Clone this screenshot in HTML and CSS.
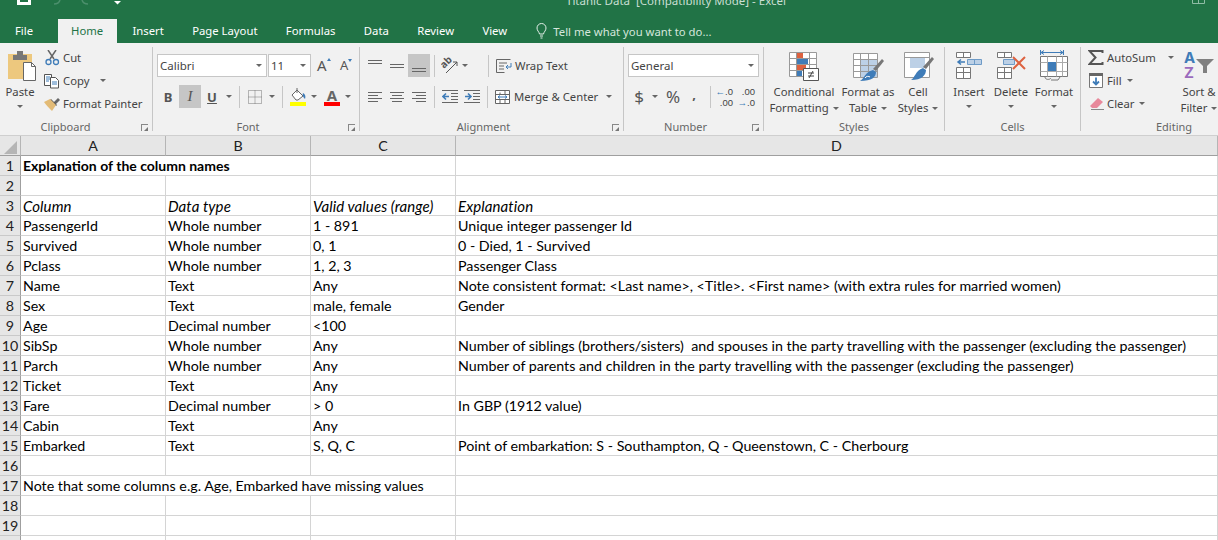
FILE: index.html
```html
<!DOCTYPE html>
<html lang="en">
<head>
  <meta charset="UTF-8" />
  <title>Titanic Data [Compatibility Mode] - Excel</title>
  <link rel="stylesheet" href="styles.css">
</head>
<body>
  <header class="titlebar">
    <svg class="qa-save" width="16" height="6" viewBox="0 0 16 6"><path d="M1 0h14v5H1z" fill="#fff"/><path d="M4 0h8v2H4z" fill="#217346"/></svg>
    <svg class="qa-undo" width="36" height="6" viewBox="0 0 36 6"><path d="M7 0c-1 3-3 4-6 4M29 0c1 3 3 4 6 4" fill="none" stroke="#4b8f6c" stroke-width="1.5"/></svg>
    <svg class="qa-more" width="7" height="5" viewBox="0 0 7 5"><path d="M0 1h7L3.5 4.500z" fill="#fff"/></svg>
    <span class="doc-title">Titanic Data&nbsp; [Compatibility Mode] - Excel</span>
    <svg class="win-btn" width="13" height="4" viewBox="0 0 13 4"><path d="M.5 0v3.500h12V0M6.500 0v3.500" fill="none" stroke="#8fbca5"/></svg>
  </header>

  <nav class="tabs">
    <span class="tab tab-file">File</span>
    <span class="tab tab-active">Home</span>
    <span class="tab">Insert</span>
    <span class="tab">Page Layout</span>
    <span class="tab">Formulas</span>
    <span class="tab">Data</span>
    <span class="tab">Review</span>
    <span class="tab">View</span>
    <span class="tell-me">
      <svg width="11" height="16" viewBox="0 0 11 16"><path d="M3.500 11C3 8.500 1 7.800 1 5a4.500 4.500 0 0 1 9 0c0 2.800-2 3.500-2.500 6zM4 13h3M4.500 15h2" fill="none" stroke="#e4efe9"/></svg>
      Tell me what you want to do...
    </span>
  </nav>

  <section class="ribbon">
    <!-- Clipboard -->
    <div class="group group-clipboard">
      <div class="group-body">
        <div class="big big-paste">
          <svg class="paste-icon" width="32" height="37" viewBox="5 47 32 37">
            <path d="M8 54h24v25H8z" fill="#edc87e"/>
            <path d="M13 55h14v5H13zM17 51h6v4h-6z" fill="#777"/>
            <path d="M23.500 62.500h8l4 4v14h-12z" fill="#fff" stroke="#666"/>
            <path d="M31.500 62.500v4h4" fill="none" stroke="#666"/>
          </svg>
          <span>Paste</span>
          <span class="caret"></span>
        </div>
        <div class="stack">
          <div class="row-small">
            <svg width="16" height="16" viewBox="44 49 16 16"><path d="M50 58 56 49M54 58 48 49" stroke="#666" stroke-width="1.500" fill="none"/><circle cx="48.500" cy="61" r="2.500" fill="none" stroke="#3f7cb8" stroke-width="1.300"/><circle cx="56" cy="61" r="2.500" fill="none" stroke="#3f7cb8" stroke-width="1.300"/></svg>
            <span>Cut</span>
          </div>
          <div class="row-small">
            <svg width="16" height="16" viewBox="44 72 16 16"><path d="M44.500 73.500h7v11h-7z" fill="#fff" stroke="#555"/><path d="M50.500 76.500h5l3 3v7.500h-8z" fill="#fff" stroke="#555"/><path d="M46 76h4M46 78h4M46 80h3M52 81h5M52 83h5" stroke="#3f7cb8"/></svg>
            <span>Copy</span><span class="caret caret-copy"></span>
          </div>
          <div class="row-small">
            <svg width="16" height="16" viewBox="44 95 16 16"><path d="M53 102l5-5 2 2-5 5z" fill="#666"/><path d="M51 98l6 6-1 1-6-6z" fill="#555"/><path d="M44 101l6-3 6 6-4 6c-3-3-6-6-8-9z" fill="#e3bb76"/></svg>
            <span>Format Painter</span>
          </div>
        </div>
      </div>
      <div class="group-foot"><span class="group-label">Clipboard</span><span class="launcher"></span></div>
    </div>

    <!-- Font -->
    <div class="group group-font">
      <div class="group-body tools">
        <div class="tool-row">
          <div class="select select-font">Calibri<span class="caret"></span></div>
          <div class="select select-size">11<span class="caret"></span></div>
          <span class="font-step font-grow">A<i class="tri-up"></i></span>
          <span class="font-step font-shrink">A<i class="tri-down"></i></span>
        </div>
        <div class="tool-row">
          <span class="btn glyph-b">B</span>
          <span class="btn btn-on glyph-i">I</span>
          <span class="btn glyph-u">U</span>
          <span class="caret-slot"><span class="caret"></span></span>
          <span class="sep"></span>
          <span class="btn">
            <svg width="14" height="14" viewBox="0 0 14 14"><path d="M.5.500h13v13H.5zM7 .5v13M.5 7h13" fill="none" stroke="#777" stroke-dasharray="1 1"/></svg>
          </span>
          <span class="caret-slot"><span class="caret"></span></span>
          <span class="sep"></span>
          <span class="btn">
            <svg width="18" height="20" viewBox="0 0 18 20"><path d="M3 8l5-5 6 6-5 4H7z" fill="#fff" stroke="#666"/><path d="M8 1v5" stroke="#666"/><path d="M14 6c2 1 3 3 2 6-1-1-3-3-2-6z" fill="#3f7cb8"/><path d="M1 15h16v4H1z" fill="#ffff00"/></svg>
          </span>
          <span class="caret-slot caret-slot-fill"><span class="caret"></span></span>
          <span class="btn btn-color"><span class="color-a">A</span></span>
          <span class="caret-slot caret-slot-color"><span class="caret"></span></span>
        </div>
      </div>
      <div class="group-foot"><span class="group-label">Font</span><span class="launcher"></span></div>
    </div>

    <!-- Alignment -->
    <div class="group group-align">
      <div class="group-body tools">
        <div class="tool-row">
          <span class="btn"><svg width="14" height="14" viewBox="0 0 14 14"><path d="M0 1.500h14M0 4.500h14" stroke="#666"/></svg></span>
          <span class="btn"><svg width="14" height="14" viewBox="0 0 14 14"><path d="M0 5.500h14M0 8.500h14" stroke="#666"/></svg></span>
          <span class="btn btn-on"><svg width="14" height="14" viewBox="0 0 14 14"><path d="M0 9.500h14M0 12.500h14" stroke="#666"/></svg></span>
          <span class="sep"></span>
          <span class="btn">
            <svg width="18" height="18" viewBox="0 0 18 18"><text class="orient-text" transform="translate(3 12) rotate(-45)">ab</text><path d="M5 16 16 5M16 5h-4M16 5v4" fill="none" stroke="#555"/></svg>
          </span>
          <span class="caret-slot caret-slot-orient"><span class="caret"></span></span>
          <span class="sep sep-wrap"></span>
          <svg class="wide-icon" width="16" height="16" viewBox="0 0 16 16"><path d="M.5 1.500h14M.5 14.500h8M.5 1.500v13" fill="none" stroke="#666"/><path d="M3 5h8M3 8h5M3 11h5" stroke="#666"/><path d="M15 5v4h-5M12 7l-2 2 2 2" fill="none" stroke="#3f7cb8"/></svg>
          <span class="tool-text">Wrap Text</span>
        </div>
        <div class="tool-row">
          <span class="btn"><svg width="14" height="14" viewBox="0 0 14 14"><path d="M0 2.500h14M0 5.500h10M0 8.500h14M0 11.500h10" stroke="#666"/></svg></span>
          <span class="btn"><svg width="14" height="14" viewBox="0 0 14 14"><path d="M0 2.500h14M2 5.500h10M0 8.500h14M2 11.500h10" stroke="#666"/></svg></span>
          <span class="btn"><svg width="14" height="14" viewBox="0 0 14 14"><path d="M0 2.500h14M4 5.500h10M0 8.500h14M4 11.500h10" stroke="#666"/></svg></span>
          <span class="sep"></span>
          <span class="btn"><svg width="16" height="14" viewBox="0 0 16 14"><path d="M0 .5h16M9 3.500h7M9 6.500h7M9 9.500h7M0 12.500h16" stroke="#666"/><path d="M1 6.500h6M4 3.500l-3 3 3 3" fill="none" stroke="#3f7cb8" stroke-width="1.600"/></svg></span>
          <span class="btn"><svg width="16" height="14" viewBox="0 0 16 14"><path d="M0 .5h16M9 3.500h7M9 6.500h7M9 9.500h7M0 12.500h16" stroke="#666"/><path d="M1 6.500h6M4 3.500l3 3-3 3" fill="none" stroke="#3f7cb8" stroke-width="1.600"/></svg></span>
          <span class="sep sep-merge"></span>
          <svg class="wide-icon" width="16" height="16" viewBox="0 0 16 16"><path d="M.5 1.500h14v13H.5zM.5 5.500h14M.5 10.500h14" fill="#fff" stroke="#666"/><path d="M5 3.500v2M10 1.500v4M5 10.500v4M10 10.500v4" stroke="#666"/><path d="M3 8h9M5 6.500 3 8l2 1.500M10 6.500 12 8l-2 1.500" fill="none" stroke="#3f7cb8"/></svg>
          <span class="tool-text">Merge &amp; Center</span>
          <span class="caret caret-merge"></span>
        </div>
      </div>
      <div class="group-foot"><span class="group-label">Alignment</span><span class="launcher"></span></div>
    </div>

    <!-- Number -->
    <div class="group group-number">
      <div class="group-body tools">
        <div class="tool-row">
          <div class="select select-format">General<span class="caret"></span></div>
        </div>
        <div class="tool-row">
          <span class="btn num-glyph">$</span>
          <span class="caret-slot caret-slot-num"><span class="caret"></span></span>
          <span class="btn num-glyph num-percent">%</span>
          <span class="btn num-glyph num-comma">,</span>
          <span class="sep sep-num"></span>
          <span class="btn decimal"><i><b>←</b>.0</i><i>.00</i></span>
          <span class="btn decimal"><i>.00</i><i><b>→</b>.0</i></span>
        </div>
      </div>
      <div class="group-foot"><span class="group-label">Number</span><span class="launcher"></span></div>
    </div>

    <!-- Styles -->
    <div class="group group-styles">
      <div class="group-body">
        <div class="big big-cond">
          <svg width="34" height="37" viewBox="788 47 34 37">
            <path d="M790.500 52.500h27v24h-27zM790.500 58.500h27M790.500 64.500h27M790.500 70.500h27M797.500 52.500v24M810.500 52.500v24" fill="#fff" stroke="#999"/>
            <path d="M798 53h6v5h-6zM798 65h9v5h-9z" fill="#dd6240"/>
            <path d="M798 59h11v5h-11zM798 71h5v5h-5z" fill="#3f7cb8"/>
            <path d="M804.500 68.500h15v12h-15z" fill="#fff" stroke="#555"/>
            <path d="M809 73h6M809 76h6M810 78l4-7" fill="none" stroke="#444"/>
          </svg>
          <span>Conditional</span>
          <span>Formatting<i class="caret caret-inline"></i></span>
        </div>
        <div class="big big-table">
          <svg width="34" height="37" viewBox="853 47 34 37">
            <path d="M855.500 53.500h24v24h-24z" fill="#fff" stroke="#999"/>
            <path d="M862 59h17v18h-17z" fill="#bcd0e6"/>
            <path d="M855.500 59.500h24M855.500 65.500h24M855.500 71.500h24M862.500 53.500v24M870.500 53.500v24" fill="none" stroke="#999"/>
            <path d="M884 59l2 2-8 10-3-2z" fill="#777"/>
            <path d="M875 70l3 2c0 5-4 9-16 9 4-2 5-9 13-11z" fill="#3f7cb8"/>
            <path d="M867 78c1-2 4-2 5-1" stroke="#fff" fill="none"/>
          </svg>
          <span>Format as</span>
          <span>Table<i class="caret caret-inline"></i></span>
        </div>
        <div class="big big-cell">
          <svg width="34" height="37" viewBox="902 47 34 37">
            <path d="M905.500 52.500h25v25h-25z" fill="#fff" stroke="#999"/>
            <path d="M905.500 57.500h25" stroke="#999"/>
            <path d="M911 58h15v10h-15z" fill="#bcd0e6"/>
            <path d="M933 57l2 2-8 10-3-2z" fill="#777"/>
            <path d="M924 68l3 2c0 5-4 10-15 10 4-2 4-9 12-12z" fill="#3f7cb8"/>
          </svg>
          <span>Cell</span>
          <span>Styles<i class="caret caret-inline"></i></span>
        </div>
      </div>
      <div class="group-foot"><span class="group-label">Styles</span></div>
    </div>

    <!-- Cells -->
    <div class="group group-cells">
      <div class="group-body">
        <div class="big big-insert">
          <svg width="30" height="37" viewBox="955 47 30 37">
            <path d="M957.500 52.500h14v5h-14zM964.500 52.500v5M957.500 67.500h14v11h-14zM957.500 72.500h14M964.500 67.500v11" fill="#fff" stroke="#777"/>
            <path d="M968.500 59.500h14v5h-14zM975.500 59.500v5" fill="#bcd0e6" stroke="#6e9bc7"/>
            <path d="M966 62h-7M962 59.500 959 62l3 2.500" fill="none" stroke="#3f7cb8" stroke-width="1.500"/>
          </svg>
          <span>Insert</span>
          <span class="caret caret-big"></span>
        </div>
        <div class="big big-delete">
          <svg width="32" height="37" viewBox="996 47 32 37">
            <path d="M998.500 52.500h14v5h-14zM1005.500 52.500v5M998.500 67.500h14v11h-14zM998.500 72.500h14M1005.500 67.500v11" fill="#fff" stroke="#777"/>
            <path d="M1004.500 59.500h11v5h-11z" fill="#bcd0e6" stroke="#6e9bc7"/>
            <path d="M1014 57l12 12M1026 57l-12 12" stroke="#dd6240" stroke-width="2"/>
          </svg>
          <span>Delete</span>
          <span class="caret caret-big"></span>
        </div>
        <div class="big big-format">
          <svg width="30" height="37" viewBox="1039 47 30 37">
            <path d="M1040.500 50v5M1063.500 50v5" stroke="#3f7cb8"/>
            <path d="M1041 52.500h22M1044 50.500l-3 2 3 2M1060 50.500l3 2-3 2" fill="none" stroke="#3f7cb8"/>
            <path d="M1040.500 56.500h27v20h-27z" fill="#fff" stroke="#777"/>
            <path d="M1040.500 62.500h27M1040.500 71.500h27M1047.500 56.500v20M1056.500 56.500v20M1062.500 56.500v20" fill="none" stroke="#aaa"/>
            <path d="M1048 62h8v9h-8z" fill="#3f7cb8"/>
            <path d="M1045 77c0 3 5 3 6 1M1051 80h7l2-3" fill="none" stroke="#777"/>
          </svg>
          <span>Format</span>
          <span class="caret caret-big"></span>
        </div>
      </div>
      <div class="group-foot"><span class="group-label">Cells</span></div>
    </div>

    <!-- Editing -->
    <div class="group group-edit">
      <div class="group-body">
        <div class="stack stack-edit">
          <div class="row-small">
            <svg width="16" height="16" viewBox="1088 49 16 16"><path d="M1102.500 52v-2h-13l6 6.500-6 6.500h13v-2" fill="none" stroke="#555" stroke-width="2"/></svg>
            <span>AutoSum</span><span class="caret caret-sum"></span>
          </div>
          <div class="row-small">
            <svg width="16" height="16" viewBox="1088 72 16 16"><path d="M1089.500 72.500h13v14h-13z" fill="#fff" stroke="#777"/><path d="M1089 72h14v3h-14z" fill="#666"/><path d="M1096 76.500v7M1093 80.500l3 3 3-3" fill="none" stroke="#3f7cb8" stroke-width="1.800"/></svg>
            <span>Fill</span><span class="caret caret-tight"></span>
          </div>
          <div class="row-small">
            <svg width="16" height="16" viewBox="1088 95 16 16"><path d="M1098 97l5 4-6 6h-5l-2-2z" fill="#e8899b"/><path d="M1091 108.500h13" stroke="#888"/></svg>
            <span>Clear</span><span class="caret caret-tight"></span>
          </div>
        </div>
        <div class="big big-sort">
          <svg width="38" height="37" viewBox="1179 47 38 37">
            <text x="1183" y="63" class="sort-a">A</text>
            <text x="1183" y="78" class="sort-z">Z</text>
            <path d="M1195 59h18l-7 7v7h-4v-7z" fill="#808080"/>
          </svg>
          <span>Sort &amp;</span>
          <span>Filter<i class="caret caret-inline"></i></span>
        </div>
      </div>
      <div class="group-foot"><span class="group-label">Editing</span></div>
    </div>
  </section>

  <main class="sheet">
    <div class="corner"><svg width="13" height="13" viewBox="0 0 13 13"><path d="M13 0v13H0z" fill="#b5b5b5"/></svg></div>
    <div class="col-head">A</div><div class="col-head">B</div><div class="col-head">C</div><div class="col-head">D</div>

    <div class="row-head">1</div><div class="cell span-2 bold">Explanation of the column names</div><div class="cell"></div><div class="cell"></div>
    <div class="row-head">2</div><div class="cell"></div><div class="cell"></div><div class="cell"></div><div class="cell"></div>
    <div class="row-head">3</div><div class="cell italic">Column</div><div class="cell italic">Data type</div><div class="cell italic">Valid values (range)</div><div class="cell italic">Explanation</div>
    <div class="row-head">4</div><div class="cell">PassengerId</div><div class="cell">Whole number</div><div class="cell">1 - 891</div><div class="cell">Unique integer passenger Id</div>
    <div class="row-head">5</div><div class="cell">Survived</div><div class="cell">Whole number</div><div class="cell">0, 1</div><div class="cell">0 - Died, 1 - Survived</div>
    <div class="row-head">6</div><div class="cell">Pclass</div><div class="cell">Whole number</div><div class="cell">1, 2, 3</div><div class="cell">Passenger Class</div>
    <div class="row-head">7</div><div class="cell">Name</div><div class="cell">Text</div><div class="cell">Any</div><div class="cell">Note consistent format: &lt;Last name&gt;, &lt;Title&gt;. &lt;First name&gt; (with extra rules for married women)</div>
    <div class="row-head">8</div><div class="cell">Sex</div><div class="cell">Text</div><div class="cell">male, female</div><div class="cell">Gender</div>
    <div class="row-head">9</div><div class="cell">Age</div><div class="cell">Decimal number</div><div class="cell">&lt;100</div><div class="cell"></div>
    <div class="row-head">10</div><div class="cell">SibSp</div><div class="cell">Whole number</div><div class="cell">Any</div><div class="cell">Number of siblings (brothers/sisters)&nbsp; and spouses in the party travelling with the passenger (excluding the passenger)</div>
    <div class="row-head">11</div><div class="cell">Parch</div><div class="cell">Whole number</div><div class="cell">Any</div><div class="cell">Number of parents and children in the party travelling with the passenger (excluding the passenger)</div>
    <div class="row-head">12</div><div class="cell">Ticket</div><div class="cell">Text</div><div class="cell">Any</div><div class="cell"></div>
    <div class="row-head">13</div><div class="cell">Fare</div><div class="cell">Decimal number</div><div class="cell">&gt; 0</div><div class="cell">In GBP (1912 value)</div>
    <div class="row-head">14</div><div class="cell">Cabin</div><div class="cell">Text</div><div class="cell">Any</div><div class="cell"></div>
    <div class="row-head">15</div><div class="cell">Embarked</div><div class="cell">Text</div><div class="cell">S, Q, C</div><div class="cell">Point of embarkation: S - Southampton, Q - Queenstown, C - Cherbourg</div>
    <div class="row-head">16</div><div class="cell"></div><div class="cell"></div><div class="cell"></div><div class="cell"></div>
    <div class="row-head">17</div><div class="cell span-3">Note that some columns e.g. Age, Embarked have missing values</div><div class="cell"></div>
    <div class="row-head">18</div><div class="cell"></div><div class="cell"></div><div class="cell"></div><div class="cell"></div>
    <div class="row-head">19</div><div class="cell"></div><div class="cell"></div><div class="cell"></div><div class="cell"></div>
    <div class="row-head"></div><div class="cell"></div><div class="cell"></div><div class="cell"></div><div class="cell"></div>
  </main>
</body>
</html>
```

FILE: styles.css
```css
* {
  box-sizing: border-box;
}
html, body {
  margin: 0;
  height: 540px;
  overflow: hidden;
}
body {
  font-family: "Noto Sans", sans-serif;
  font-size: 11.3px;
  color: #444;
  background-color: #fff;
  display: flex;
  flex-direction: column;
}
svg {
  display: block;
  flex: none;
}

/* title bar, cut off by the top of the window */
.titlebar {
  height: 19px;
  flex: none;
  background-color: #217346;
  color: #c9dfd3;
  display: flex;
  align-items: flex-start;
  overflow: hidden;
}
.qa-save {
  margin-left: 16px;
}
.qa-undo {
  margin-left: 21px;
}
.qa-more {
  margin-left: 25px;
}
.doc-title {
  margin-left: 445px;
  margin-top: -7px;
  font-size: 11.5px;
  line-height: 16px;
  white-space: nowrap;
}
.win-btn {
  margin-left: auto;
  margin-right: 13px;
}

/* tabs */
.tabs {
  height: 24px;
  flex: none;
  background-color: #217346;
  color: #fff;
  display: flex;
  align-items: center;
  font-size: 11.3px;
}
.tab {
  height: 24px;
  line-height: 24px;
  padding: 0 14.2px;
}
.tab-file {
  padding: 0 25px 0 15px;
}
.tab-active {
  background-color: #f1f1f1;
  color: #217346;
  padding: 0 14px 0 13px;
  margin-right: 1px;
}
.tell-me {
  display: flex;
  align-items: center;
  gap: 6px;
  margin-left: 15px;
  color: #d5e6dc;
}

/* ribbon */
.ribbon {
  height: 93px;
  flex: none;
  background-color: #f1f1f1;
  border-bottom: 1px solid #cfcfcf;
  display: flex;
  padding-top: 4px;
}
.group {
  height: 84px;
  flex: none;
  display: flex;
  flex-direction: column;
  border-right: 1px solid #c6c6c6;
}
.group-clipboard { width: 153px; padding-left: 5px; }
.group-font { width: 207px; padding-left: 4px; }
.group-align { width: 264px; padding-left: 4px; }
.group-number { width: 140px; padding-left: 4px; }
.group-styles { width: 181px; padding-left: 6px; }
.group-cells { width: 136px; }
.group-edit { flex: 1; border-right: none; padding-left: 7px; }

.group-body {
  height: 69px;
  flex: none;
  display: flex;
}
.group-foot {
  height: 15px;
  flex: none;
  display: flex;
  align-items: flex-start;
  padding-top: 3px;
}
.group-label {
  flex: 1;
  text-align: center;
  color: #666;
  font-size: 11px;
  line-height: 16px;
}
.group-clipboard .group-label { padding-right: 6px; }
.group-styles .group-label { padding-right: 6px; }
.group-edit .group-label { padding-left: 42px; }
.launcher {
  width: 7px;
  height: 7px;
  margin: 5px 4px 0 9px;
  border-left: 1px solid #888;
  border-top: 1px solid #888;
  position: relative;
}
.launcher::after {
  content: "";
  position: absolute;
  right: 0;
  bottom: 0;
  width: 0;
  height: 0;
  border-bottom: 4px solid #777;
  border-left: 4px solid transparent;
}

/* carets */
.caret {
  display: inline-block;
  width: 0;
  height: 0;
  border-top: 3px solid #666;
  border-left: 3.5px solid transparent;
  border-right: 3.5px solid transparent;
  flex: none;
}
.caret-inline {
  margin-left: 4px;
  vertical-align: 2px;
}
.caret-copy { margin-left: 8px; }
.caret-merge { margin-left: 8px; }
.caret-sum { margin-left: 9px; }
.caret-tight { margin-left: 2px; }
.caret-big { margin-top: 5px; }
.caret-slot {
  width: 11px;
  height: 23px;
  display: flex;
  align-items: center;
  justify-content: center;
}
.caret-slot-fill { width: 10px; }
.caret-slot-color { width: 6px; }
.caret-slot-orient { width: 8px; }
.caret-slot-num { width: 10px; }

/* large buttons */
.big {
  flex: none;
  display: flex;
  flex-direction: column;
  align-items: center;
  line-height: 16px;
  white-space: nowrap;
}
.big-paste { width: 30px; margin-right: 6px; }
.big-paste .caret { margin-top: 5px; }
.paste-icon { align-self: flex-start; }
.big-cond { width: 68px; }
.big-table { width: 60px; }
.big-cell { width: 40px; }
.big-insert { width: 48px; }
.big-delete { width: 36px; }
.big-format { width: 50px; }
.big-sort { width: 38px; margin-left: auto; }
.big i {
  font-style: normal;
}

/* small stacked buttons */
.stack {
  margin-top: -1px;
  margin-left: 3px;
}
.stack-edit {
  margin-left: 0;
}
.row-small {
  height: 23px;
  display: flex;
  align-items: center;
  gap: 3px;
  white-space: nowrap;
}

/* toolbars */
.tools {
  flex-direction: column;
  gap: 8px;
  padding-top: 7px;
}
.tool-row {
  height: 23px;
  display: flex;
  align-items: center;
}
.btn {
  width: 22px;
  height: 23px;
  flex: none;
  display: flex;
  align-items: center;
  justify-content: center;
}
.btn-on {
  background-color: #c6c6c6;
}
.sep {
  width: 1px;
  height: 22px;
  margin: 0 4px;
  background-color: #c6c6c6;
  flex: none;
}
.sep-wrap { margin: 0 7px 0 19px; }
.sep-merge { margin: 0 7px 0 4px; }
.sep-num { margin: 0 3px 0 6px; }
.group-font .sep { margin: 0 4px 0 5px; }
.wide-icon {
  margin-right: 3px;
}
.tool-text {
  white-space: nowrap;
}
.orient-text {
  font-family: "Noto Sans", sans-serif;
  font-size: 10px;
  font-weight: 700;
  fill: #555;
}

.select {
  height: 23px;
  background-color: #fff;
  border: 1px solid #c6c6c6;
  display: flex;
  align-items: center;
  justify-content: space-between;
  padding: 0 4px 0 2px;
  color: #444;
  font-size: 11.5px;
}
.select-font { width: 110px; margin-right: 1px; }
.select-size { width: 43px; }
.select-format { width: 131px; }

.font-step {
  display: flex;
  align-items: flex-start;
  color: #555;
  line-height: 1;
}
.font-grow {
  width: 23px;
  margin-left: 6px;
  font-size: 15px;
}
.font-shrink {
  font-size: 13px;
}
.tri-up, .tri-down {
  width: 0;
  height: 0;
  border-left: 2.500px solid transparent;
  border-right: 2.500px solid transparent;
}
.tri-up { border-bottom: 3px solid #3f7cb8; }
.tri-down { border-top: 3px solid #3f7cb8; }

.glyph-b { font-weight: 700; font-size: 13px; color: #555; }
.glyph-i { font-family: "Liberation Serif", serif; font-style: italic; font-size: 15px; color: #555; }
.glyph-u { font-weight: 700; font-size: 13px; color: #555; text-decoration: underline; }

.btn-color {
  width: 26px;
}
.color-a {
  font-weight: 700;
  font-size: 15px;
  line-height: 14px;
  width: 16px;
  text-align: center;
  color: #666;
  border-bottom: 4px solid #f00;
}

.num-glyph {
  font-size: 17px;
  color: #555;
}
.num-percent { margin-left: 2px; }
.num-comma { width: 20px; font-weight: 700; font-size: 13px; padding-bottom: 6px; }
.decimal {
  flex-direction: column;
  font-family: "Liberation Sans", sans-serif;
  font-size: 9.5px;
  line-height: 11px;
  align-items: flex-end;
  padding-right: 3px;
}
.decimal i {
  font-style: normal;
}
.decimal b {
  color: #3f7cb8;
  font-weight: 700;
}

.sort-a {
  font-family: "Inter", sans-serif;
  font-size: 15px;
  font-weight: 700;
  fill: #3f7cb8;
}
.sort-z {
  font-family: "Inter", sans-serif;
  font-size: 15px;
  font-weight: 700;
  fill: #9b6bbd;
}

/* worksheet */
.sheet {
  flex: 1;
  display: grid;
  grid-template-columns: 21px 145px 145px 145px 1fr;
  grid-auto-rows: 20px;
  overflow: hidden;
  font-family: "Lato", sans-serif;
  font-size: 14.25px;
  color: #000;
}
.corner, .col-head, .row-head {
  background-color: #e6e6e6;
  color: #222;
}
.corner {
  border-right: 1px solid #b5b5b5;
  border-bottom: 1px solid #9f9f9f;
  padding: 5px 0 0 4px;
}
.col-head {
  text-align: center;
  line-height: 19px;
  border-right: 1px solid #b5b5b5;
  border-bottom: 1px solid #9f9f9f;
}
.row-head {
  text-align: center;
  line-height: 19px;
  border-right: 1px solid #9f9f9f;
  border-bottom: 1px solid #c9c9c9;
}
.cell {
  padding-left: 2px;
  line-height: 20px;
  white-space: nowrap;
  border-right: 1px solid #d4d4d4;
  border-bottom: 1px solid #d4d4d4;
}
.span-2 { grid-column: span 2; }
.span-3 { grid-column: span 3; }
.bold { font-weight: 700; font-size: 14px; }
.italic { font-style: italic; font-size: 15px; letter-spacing: 0.1px; }
```
